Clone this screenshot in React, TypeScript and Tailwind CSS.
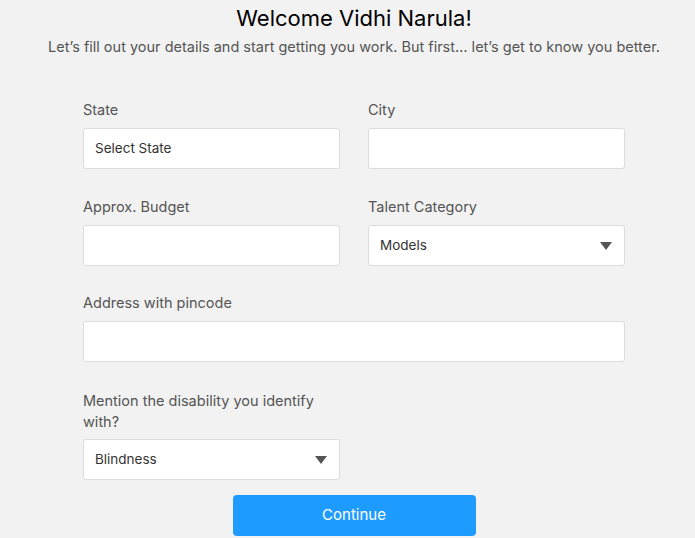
export default function App() {
  const label = "block text-[14.5px] leading-[20px] text-[#555]";
  const box =
    "w-full h-[41px] bg-white border border-[#dcdcdc] rounded-[3px] px-[11px] flex items-center text-[13.5px] text-[#333]";

  const Caret = () => (
    <svg width="12" height="8" viewBox="0 0 12 8" className="ml-auto mr-[1px]">
      <path d="M0 0 H12 L6 8 Z" fill="#555" />
    </svg>
  );

  return (
    <main
      className="min-h-[538px] bg-[#f2f2f2] pl-[13px] flex flex-col items-center"
      style={{ fontFamily: "Inter, 'Noto Sans', sans-serif" }}
    >
      <h1 className="mt-[4px] text-[22px] leading-[28px] text-black">Welcome Vidhi Narula!</h1>
      <p className="mt-[5px] text-[14.5px] leading-[20px] text-[#555]">
        Let’s fill out your details and start getting you work. But first… let’s get to know you better.
      </p>

      <form className="w-[542px] mt-[43px] grid grid-cols-2 gap-x-[28px]">
        <div>
          <label className={label}>State</label>
          <div className={`${box} mt-[8px]`}>Select State</div>
        </div>
        <div>
          <label className={label}>City</label>
          <div className={`${box} mt-[8px]`}></div>
        </div>

        <div className="mt-[28px]">
          <label className={label}>Approx. Budget</label>
          <div className={`${box} mt-[8px]`}></div>
        </div>
        <div className="mt-[28px]">
          <label className={label}>Talent Category</label>
          <div className={`${box} mt-[8px]`}>
            Models
            <Caret />
          </div>
        </div>

        <div className="col-span-2 mt-[27px]">
          <label className={label}>Address with pincode</label>
          <div className={`${box} mt-[8px]`}></div>
        </div>

        <div className="mt-[28px]">
          <label className={`${label} leading-[21px]`}>Mention the disability you identify with?</label>
          <div className={`${box} mt-[7px]`}>
            Blindness
            <Caret />
          </div>
        </div>
      </form>

      <button
        type="button"
        className="mt-[15px] w-[243px] h-[41px] rounded-[4px] bg-[#1e9bfe] text-white text-[15px]"
      >
        Continue
      </button>
    </main>
  );
}
